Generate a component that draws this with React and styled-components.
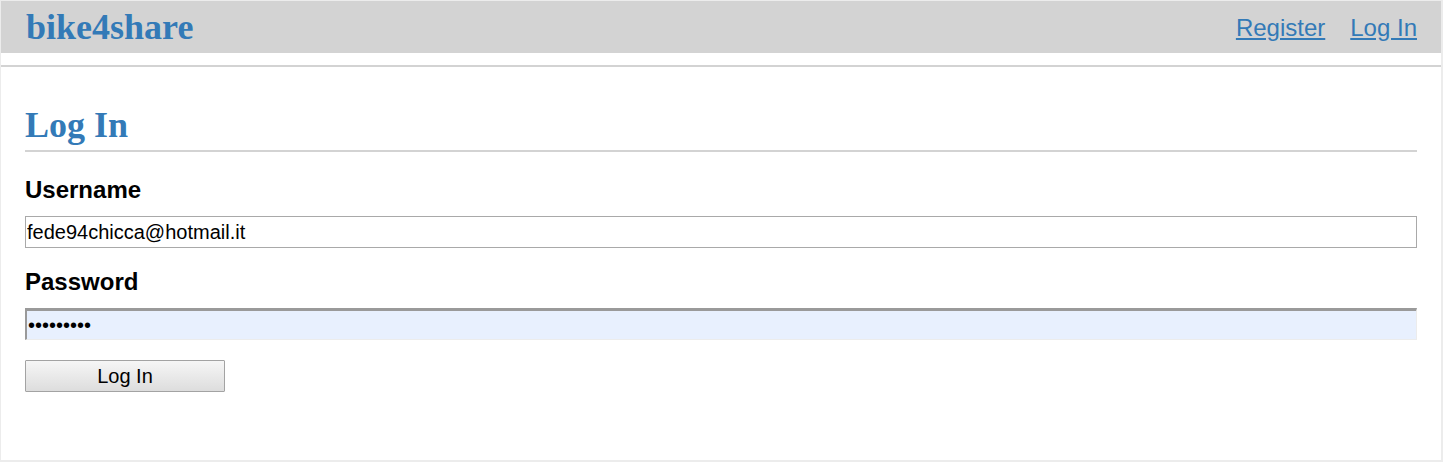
import React from 'react';
import styled, { createGlobalStyle } from 'styled-components';

const GlobalStyle = createGlobalStyle`
    html, body {
        margin: 0;
        padding: 0;
        background: #ffffff;
    }
    body {
        font-family: "Liberation Sans", Arial, sans-serif;
        color: #000000;
    }
`;

const Frame = styled.div`
    box-sizing: border-box;
    width: 1443px;
    height: 462px;
    border: 1px solid #ececec;
    border-right-width: 2px;
    border-bottom-width: 2px;
    background: #ffffff;
    overflow: hidden;
`;

const HeaderBar = styled.div`
    display: flex;
    align-items: center;
    justify-content: space-between;
    height: 52px;
    padding: 0 24px 0 25px;
    background: #d3d3d3;
`;

const Logo = styled.a`
    font-family: "Liberation Serif", "Times New Roman", serif;
    font-weight: bold;
    font-size: 36px;
    line-height: 41px;
    color: #337ab7;
    text-decoration: none;
`;

const Nav = styled.nav`
    display: flex;
    align-items: center;
    gap: 25px;
`;

const NavLink = styled.a`
    font-size: 24px;
    line-height: 27px;
    color: #337ab7;
    text-decoration: underline;
    cursor: pointer;
`;

const Divider = styled.div`
    height: 2px;
    margin-top: 12px;
    background: #d3d3d3;
`;

const Main = styled.main`
    padding: 0 24px;
`;

const Title = styled.h1`
    margin: 38px 0 0;
    padding-bottom: 5px;
    font-family: "Liberation Serif", "Times New Roman", serif;
    font-weight: bold;
    font-size: 36px;
    line-height: 40px;
    color: #337ab7;
    border-bottom: 2px solid #d3d3d3;
`;

const Form = styled.form`
    display: flex;
    flex-direction: column;
    align-items: flex-start;
    padding-top: 24px;
`;

const Field = styled.div`
    display: flex;
    flex-direction: column;
    align-self: stretch;
    margin-bottom: 20px;
`;

const Label = styled.label`
    margin-bottom: 12px;
    font-size: 24px;
    font-weight: bold;
    line-height: 28px;
`;

const Input = styled.input`
    box-sizing: border-box;
    width: 100%;
    height: 32px;
    margin: 0;
    padding: 0 1px;
    font-family: "Liberation Sans", Arial, sans-serif;
    font-size: 20px;
    color: #000000;
    background: ${p => (p.$filled ? '#e8f0fe' : '#ffffff')};
    border: 1px solid #a9a9a9;
    ${p => p.$filled && `
        border-top: 3px solid #9a9a9a;
        border-left: 2px solid #9a9a9a;
        border-right: 1px solid #ececec;
        border-bottom: 1px solid #ececec;
    `}
    outline: none;
    border-radius: 0;
`;

const Button = styled.button`
    box-sizing: border-box;
    width: 200px;
    height: 32px;
    margin: 0;
    padding: 0;
    font-family: "Liberation Sans", Arial, sans-serif;
    font-size: 20px;
    color: #000000;
    background: linear-gradient(to bottom, #f6f6f6, #dddddd);
    border: 1px solid #a3a3a3;
    border-radius: 1px;
    cursor: pointer;
`;

export default function App() {
    return (
        <>
            <GlobalStyle />
            <Frame>
                <HeaderBar>
                    <Logo>bike4share</Logo>
                    <Nav>
                        <NavLink>Register</NavLink>
                        <NavLink>Log In</NavLink>
                    </Nav>
                </HeaderBar>
                <Divider />
                <Main>
                    <Title>Log In</Title>
                    <Form onSubmit={e => e.preventDefault()}>
                        <Field>
                            <Label htmlFor="username">Username</Label>
                            <Input id="username" type="text" defaultValue="fede94chicca@hotmail.it" />
                        </Field>
                        <Field>
                            <Label htmlFor="password">Password</Label>
                            <Input id="password" type="password" defaultValue="123456789" $filled />
                        </Field>
                        <Button type="submit">Log In</Button>
                    </Form>
                </Main>
            </Frame>
        </>
    );
}
